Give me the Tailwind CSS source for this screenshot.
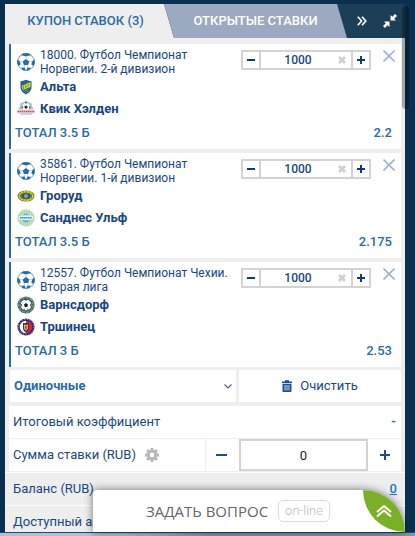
<!DOCTYPE html>
<html lang="ru">
<head>
<meta charset="utf-8">
<meta name="viewport" content="width=device-width, initial-scale=1">
<title>Купон ставок</title>
<script src="https://cdn.jsdelivr.net/npm/@tailwindcss/browser@4"></script>
</head>
<body class="relative h-screen overflow-hidden bg-[#0b304f] font-['Roboto','Liberation_Sans',sans-serif] text-[#1a4682] flex flex-col">

<svg class="hidden" aria-hidden="true">
  <symbol id="ball" viewBox="0 0 18 18">
    <circle cx="9" cy="9" r="8.4" fill="#fff" stroke="#5f90bd" stroke-width=".9"/>
    <path fill="#2a6ba6" d="M9 6l3.300 2.400-1.200 3.700H6.900L5.700 8.400zM3.800 2L8 3.200h2L14.200 2 11.500.3h-5zM.4 6.500l2.400 1.700.9 3.300L1.300 13 .2 10zM17.600 6.500l-2.400 1.700-.9 3.300 2.400 1.500 1.100-3zM4.200 14.800l3.500-.4 1 3.200-3-.4zM13.800 14.800l-3.500-.4-1 3.200 3-.4z"/>
    <path fill="none" stroke="#8fb2d3" stroke-width=".6" d="M9 3v3M2.800 8.300l3 .2M15.200 8.300l-3 .2M7.600 14.600l-.6-2.600M10.400 14.600l.6-2.600"/>
  </symbol>
  <symbol id="close" viewBox="0 0 12 12"><path d="M.5.5l11 11M11.500.5l-11 11" stroke="#9fb3d1" stroke-width="1.600" fill="none"/></symbol>
  <symbol id="clear" viewBox="0 0 8 8"><path d="M1 1l6 6M7 1L1 7" stroke="#d0d0d0" stroke-width="2.800" fill="none"/></symbol>
  <symbol id="minus" viewBox="0 0 8 8"><path d="M0 4h8" stroke="#0f3b7c" stroke-width="2"/></symbol>
  <symbol id="plus" viewBox="0 0 8 8"><path d="M0 4h8M4 0v8" stroke="#0f3b7c" stroke-width="2"/></symbol>
  <symbol id="alta" viewBox="0 0 18 18">
    <path d="M3.500 3.200Q6.500 3 9 1.800q2.500 1.200 5.500 1.400v6.300q0 4-5.500 7-5.500-3-5.500-7z" fill="#27618a"/>
    <path d="M4.500 8L13.500 4v5l-8 3z" fill="#d8da32"/>
    <path d="M6.300 8v3M8.800 7v3M11.200 6v2.500" stroke="#27618a" stroke-width=".7"/>
    <path d="M6.500 13.200l5-2M8.500 14.700l3.500-2" stroke="#5c9a72" stroke-width=".9"/>
  </symbol>
  <symbol id="kvik" viewBox="0 0 18 18">
    <path d="M9 .3l1.700 2 3.600.8.600 3 1.800 3.200H1.300L3.100 6.100l.6-3 3.600-.8z" fill="#a9bfd4"/>
    <circle cx="9" cy="6.700" r="4.500" fill="#f8f8f8" stroke="#888" stroke-width=".6"/>
    <path d="M9 5.400l1.600 1.200-.6 1.900H8l-.6-1.900zM7.700 2.600h2.600L9 3.700zM4.800 6l1.200 1-.7 1.800zM13.200 6L12 7l.7 1.800z" fill="#222"/>
    <path d="M0 9.700h18v3.600H0z" fill="#efd3d8"/>
    <path d="M.5 11.500h17" stroke="#cf4a58" stroke-width="1.500" stroke-dasharray="1.500 .6"/>
    <path d="M3 14h12" stroke="#8bb0d3" stroke-width="1"/>
  </symbol>
  <symbol id="grorud" viewBox="0 0 18 18">
    <ellipse cx="9" cy="9" rx="8.500" ry="5.600" fill="#6a7030"/>
    <ellipse cx="9" cy="9" rx="6.800" ry="4.200" fill="none" stroke="#d9d63a" stroke-width="1.600" stroke-dasharray="2.400 .6"/>
    <ellipse cx="9" cy="9" rx="4.200" ry="2.700" fill="#245a8d"/>
    <circle cx="9" cy="9" r="1.700" fill="#e2dc4b"/><circle cx="9" cy="9" r=".8" fill="#245a8d"/>
  </symbol>
  <symbol id="sandnes" viewBox="0 0 18 18">
    <circle cx="9" cy="9" r="8.500" fill="#9fd2b3"/>
    <circle cx="9" cy="9" r="7.200" fill="none" stroke="#e6e3a4" stroke-width="1.600" stroke-dasharray="1.500 1"/>
    <circle cx="9" cy="9" r="5.600" fill="#d6f0ea"/>
    <path d="M5 6.300q4-4 8 0z" fill="#6fb2cf"/>
    <path d="M2 7.300h14v3H2z" fill="#eefaf5"/>
    <path d="M3 8.800h12" stroke="#448fb0" stroke-width="1.500" stroke-dasharray="1.600 .3"/>
    <path d="M4.500 11.300h9q-4.500 5-9 0z" fill="#62aec2"/>
  </symbol>
  <symbol id="varns" viewBox="0 0 18 18">
    <circle cx="9" cy="9" r="8.600" fill="#3d6178"/>
    <circle cx="9" cy="9" r="7.300" fill="none" stroke="#86a552" stroke-width="1.300" stroke-dasharray="3 1.200"/>
    <circle cx="9" cy="9" r="5.800" fill="#fafafa" stroke="#2a5a80" stroke-width=".7"/>
    <path d="M9 7l2 1.500-.8 2.400H7.800L7 8.500zM7.300 3.600h3.400L9 4.800zM3.600 7.500l1.400 1.200-.6 2zM14.400 7.500L13 8.700l.6 2zM5.900 13.200l1.500-.5.500 1.400zM12.100 13.200l-1.500-.5-.5 1.400z" fill="#1b1f24"/>
  </symbol>
  <symbol id="trin" viewBox="0 0 18 18">
    <circle cx="9" cy="9" r="8.600" fill="#23287a"/>
    <circle cx="9" cy="9" r="7.600" fill="none" stroke="#c9b463" stroke-width="1" stroke-dasharray="1.200 1.600"/>
    <path d="M9 2.700a6.300 6.300 0 000 12.600z" fill="#fff"/><path d="M9 2.700a6.300 6.300 0 010 12.600z" fill="#ee1c28"/>
    <path d="M6 5h6v5.500q0 2.500-3 4-3-1.500-3-4z" fill="#2b3490"/>
    <path d="M7 6.300l2 .9 2-.9v4.500l-2 2-2-2z" fill="#e7b530"/><path d="M8.200 8.200h1.600v2.600H8.200z" fill="#a0482c"/>
  </symbol>
</svg>

<main class="flex-1 min-h-0 overflow-hidden pt-1 pl-[5px] pr-[10px]">
  <div class="min-h-full bg-[#eee]">
    <nav class="flex h-[34px] bg-[#1c3f57] text-[13px] font-medium" aria-label="Купон">
      <button class="w-[169px] -mr-[10px] pr-[8px] bg-[#eee] text-[#2a6ba6] [clip-path:polygon(0_0,159px_0,169px_100%,0_100%)]">КУПОН СТАВОК (3)</button>
      <button class="flex-1 bg-[#9ba9c1] text-white [clip-path:polygon(0_0,calc(100%-10px)_0,100%_100%,10px_100%)]">ОТКРЫТЫЕ СТАВКИ</button>
      <button class="w-[29px] grid place-items-center" aria-label="Вперёд"><svg class="size-[10px]" viewBox="0 0 10 10" fill="none" stroke="#fff" stroke-width="1.600"><path d="M.8.800L4.600 5 .8 9.200M5 .8L8.800 5 5 9.200"/></svg></button>
      <button class="w-[29px] grid place-items-center pr-[2px]" aria-label="Свернуть"><svg class="size-[14px]" viewBox="0 0 14 14"><path d="M7.500 1v5.500H13l-1.800-1.800L14 1.900 12.100 0 9.300 2.800zM6.500 13V7.500H1l1.800 1.800L0 12.100 1.900 14l2.800-2.800z" fill="#fff"/></svg></button>
    </nav>

    <section class="flex flex-col gap-1 px-1 pt-[6px]" aria-label="Ставки">
      <article class="border-l-2 border-[#2a6ba6] bg-white px-1 pt-1 pb-1">
        <div class="flex items-start">
          <div class="flex flex-1 items-center pl-[2px] gap-[5px]">
            <svg class="size-[18px] shrink-0"><use href="#ball"/></svg>
            <p class="whitespace-nowrap text-[12px] leading-[14px]">18000. Футбол Чемпионат<br>Норвегии. 2-й дивизион</p>
          </div>
          <div class="mt-[2px] flex h-5 w-[130px] shrink-0 border-2 border-[#d3d3d3]">
            <button class="w-[18px] border-r-2 border-[#d3d3d3] grid place-items-center" aria-label="Меньше"><svg class="size-2"><use href="#minus"/></svg></button>
            <input class="min-w-0 flex-1 pl-[2px] text-center text-[12px] font-medium" aria-label="Сумма ставки" value="1000">
            <button class="w-[18px] grid place-items-center" aria-label="Стереть"><svg class="size-2"><use href="#clear"/></svg></button>
            <button class="w-[18px] border-l-2 border-[#d3d3d3] grid place-items-center" aria-label="Больше"><svg class="size-2"><use href="#plus"/></svg></button>
          </div>
          <button class="ml-3 mr-[2px] mt-[2px]" aria-label="Удалить"><svg class="size-3"><use href="#close"/></svg></button>
        </div>
        <ul class="text-[13px] leading-[22px] font-bold">
          <li class="flex items-center gap-[5px] pl-[2px]"><svg class="size-[18px]"><use href="#alta"/></svg>Альта</li>
          <li class="flex items-center gap-[5px] pl-[2px]"><svg class="size-[18px]"><use href="#kvik"/></svg>Квик Хэлден</li>
        </ul>
        <p class="flex justify-between pr-[5px] pt-px text-[13px] leading-6 font-medium text-[#2a6ba6]"><span>ТОТАЛ 3.5 Б</span><span>2.2</span></p>
      </article>

      <article class="border-l-2 border-[#2a6ba6] bg-white px-1 pt-1 pb-1">
        <div class="flex items-start">
          <div class="flex flex-1 items-center pl-[2px] gap-[5px]">
            <svg class="size-[18px] shrink-0"><use href="#ball"/></svg>
            <p class="whitespace-nowrap text-[12px] leading-[14px]">35861. Футбол Чемпионат<br>Норвегии. 1-й дивизион</p>
          </div>
          <div class="mt-[2px] flex h-5 w-[130px] shrink-0 border-2 border-[#d3d3d3]">
            <button class="w-[18px] border-r-2 border-[#d3d3d3] grid place-items-center" aria-label="Меньше"><svg class="size-2"><use href="#minus"/></svg></button>
            <input class="min-w-0 flex-1 pl-[2px] text-center text-[12px] font-medium" aria-label="Сумма ставки" value="1000">
            <button class="w-[18px] grid place-items-center" aria-label="Стереть"><svg class="size-2"><use href="#clear"/></svg></button>
            <button class="w-[18px] border-l-2 border-[#d3d3d3] grid place-items-center" aria-label="Больше"><svg class="size-2"><use href="#plus"/></svg></button>
          </div>
          <button class="ml-3 mr-[2px] mt-[2px]" aria-label="Удалить"><svg class="size-3"><use href="#close"/></svg></button>
        </div>
        <ul class="text-[13px] leading-[22px] font-bold">
          <li class="flex items-center gap-[5px] pl-[2px]"><svg class="size-[18px]"><use href="#grorud"/></svg>Гроруд</li>
          <li class="flex items-center gap-[5px] pl-[2px]"><svg class="size-[18px]"><use href="#sandnes"/></svg>Санднес Ульф</li>
        </ul>
        <p class="flex justify-between pr-[5px] pt-px text-[13px] leading-6 font-medium text-[#2a6ba6]"><span>ТОТАЛ 3.5 Б</span><span>2.175</span></p>
      </article>

      <article class="border-l-2 border-[#2a6ba6] bg-white px-1 pt-1 pb-1">
        <div class="flex items-start">
          <div class="flex flex-1 items-center pl-[2px] gap-[5px]">
            <svg class="size-[18px] shrink-0"><use href="#ball"/></svg>
            <p class="whitespace-nowrap text-[12px] leading-[14px]">12557. Футбол Чемпионат Чехии.<br>Вторая лига</p>
          </div>
          <div class="mt-[2px] flex h-5 w-[130px] shrink-0 border-2 border-[#d3d3d3]">
            <button class="w-[18px] border-r-2 border-[#d3d3d3] grid place-items-center" aria-label="Меньше"><svg class="size-2"><use href="#minus"/></svg></button>
            <input class="min-w-0 flex-1 pl-[2px] text-center text-[12px] font-medium" aria-label="Сумма ставки" value="1000">
            <button class="w-[18px] grid place-items-center" aria-label="Стереть"><svg class="size-2"><use href="#clear"/></svg></button>
            <button class="w-[18px] border-l-2 border-[#d3d3d3] grid place-items-center" aria-label="Больше"><svg class="size-2"><use href="#plus"/></svg></button>
          </div>
          <button class="ml-3 mr-[2px] mt-[2px]" aria-label="Удалить"><svg class="size-3"><use href="#close"/></svg></button>
        </div>
        <ul class="text-[13px] leading-[22px] font-bold">
          <li class="flex items-center gap-[5px] pl-[2px]"><svg class="size-[18px]"><use href="#varns"/></svg>Варнсдорф</li>
          <li class="flex items-center gap-[5px] pl-[2px]"><svg class="size-[18px]"><use href="#trin"/></svg>Тршинец</li>
        </ul>
        <p class="flex justify-between pr-[5px] pt-px text-[13px] leading-6 font-medium text-[#2a6ba6]"><span>ТОТАЛ 3 Б</span><span>2.53</span></p>
      </article>
    </section>

    <div class="mt-[3px] flex h-8 gap-[3px] pl-[5px] pr-1 text-[13px]">
      <div class="grid flex-[226] items-center bg-white">
        <select class="col-start-1 row-start-1 h-full w-full appearance-none pl-1 font-bold text-[#2a6ba6]" aria-label="Тип ставки"><option>Одиночные</option></select>
        <svg class="pointer-events-none col-start-1 row-start-1 mr-1 h-[5px] w-2 justify-self-end" viewBox="0 0 8 5" fill="none" stroke="#4f6482" stroke-width="1.200"><path d="M.5.5L4 4 7.500.5"/></svg>
      </div>
      <button class="flex flex-[162] items-center justify-center gap-2 bg-white">
        <svg class="h-3 w-[10px]" viewBox="0 0 10 12" fill="#1a4f8c"><path d="M0 1.500h3V.3h4v1.200h3V3H0zM.5 3.800h9V11q0 1-1 1h-7q-1 0-1-1z"/><path d="M3 5v5.500M5 5v5.500M7 5v5.500" stroke="#fff" stroke-width=".8"/></svg>
        Очистить
      </button>
    </div>

    <div class="mx-1 mt-1 flex h-8 items-center justify-between bg-white pl-1 pr-[5px] text-[13px]">
      <span>Итоговый коэффициент</span><span class="font-bold text-[#1a78c8]">-</span>
    </div>

    <div class="mx-1 mt-px flex h-8 text-[13px]">
      <div class="flex flex-1 items-center gap-[9px] bg-white pl-1">
        <label for="stake">Сумма ставки (RUB)</label>
        <button aria-label="Настройки"><svg class="size-[14px]" viewBox="0 0 14 14"><circle cx="7" cy="7" r="3.800" fill="none" stroke="#b9b9b9" stroke-width="3.200"/><path d="M7 0v3M7 11v3M0 7h3M11 7h3M2.050 2.050L4 4M10 10l1.950 1.950M2.050 11.950L4 10M10 4l1.950-1.950" stroke="#b9b9b9" stroke-width="2.800"/><circle cx="7" cy="7" r="2.200" fill="#fff"/></svg></button>
      </div>
      <button class="ml-px grid w-[33px] place-items-center bg-white pr-[2px]" aria-label="Уменьшить"><svg class="h-[10px] w-[11px]" viewBox="0 0 11 10"><path d="M0 5h11" stroke="#1a4f8c" stroke-width="2"/></svg></button>
      <input id="stake" class="h-full w-[129px] border-2 border-[#d3d3d3] bg-white text-center text-[#222]" value="0">
      <button class="grid w-[33px] place-items-center bg-white" aria-label="Увеличить"><svg class="size-[10px]" viewBox="0 0 10 10"><path d="M0 5h10M5 0v10" stroke="#1a4f8c" stroke-width="2"/></svg></button>
    </div>

    <div class="mt-px flex h-[33px] items-center justify-between border-t border-white px-2 text-[13px]">
      <span>Баланс (RUB)</span><a href="#" class="font-medium text-[#1a78c8] underline">0</a>
    </div>
    <div class="flex h-[33px] items-center border-t border-white px-2 text-[13px]">Доступный аванс</div>
  </div>
</main>

<footer class="h-1 shrink-0 border-t border-[#33465c] bg-linear-to-r from-[#a9c3df] from-30% to-[#7e97b5] to-50%"></footer>

<div class="absolute right-[6px] top-[6px] h-[103px] w-[7px] rounded-full bg-black/30"></div>

<aside class="absolute bottom-1 left-[93px] right-[10px] flex h-[42px] items-center rounded-tl rounded-tr-[42px] bg-white shadow-[0_0_8px_rgba(0,0,0,0.55)]">
  <button class="flex flex-1 items-center justify-center gap-[10px] pl-5 font-['Open_Sans',sans-serif] text-[15px] text-[#666]">
    <span>ЗАДАТЬ ВОПРОС</span>
    <span class="rounded-[5px] border border-[#ddd] px-[6px] text-[13px] font-light leading-5 text-[#bbb] font-['Roboto',sans-serif]">on-line</span>
  </button>
  <button class="grid size-[42px] place-items-center rounded-tr-[42px] rounded-bl-[42px] bg-[#7ab026]" aria-label="Развернуть">
    <svg class="h-3 w-4" viewBox="0 0 16 12" fill="none" stroke="#fff" stroke-width="2"><path d="M1 7l7-6 7 6M1 11.500l7-6 7 6"/></svg>
  </button>
</aside>
</body>
</html>
